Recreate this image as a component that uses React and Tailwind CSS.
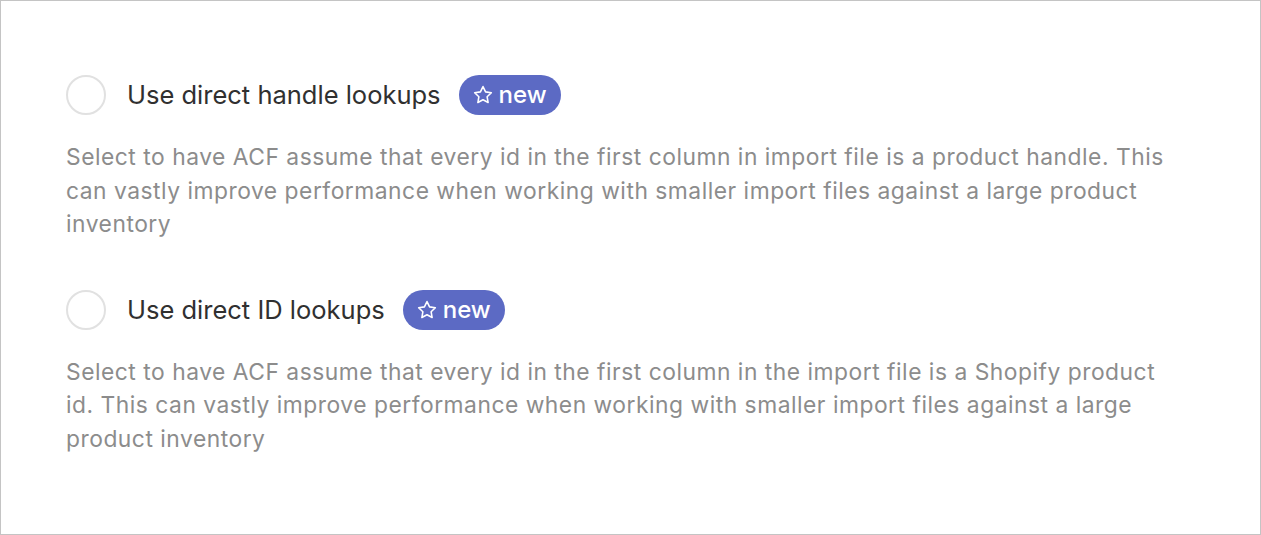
const Star = () => (
  <svg width="22" height="22" viewBox="0 0 24 24" fill="none" stroke="currentColor" strokeWidth="1.7" strokeLinejoin="round">
    <path d="M12 2.8l2.8 5.8 6.3.9-4.6 4.4 1.1 6.3L12 17.2l-5.6 3 1.1-6.3-4.6-4.4 6.3-.9z" />
  </svg>
);

const Option = ({ title, desc }) => (
  <div>
    <div className="flex items-center h-10">
      <div className="w-[40px] h-[40px] rounded-full border-2 border-[#e1e1e1] bg-white shrink-0" />
      <span className="ml-[21px] text-[25.5px] text-[#303030] leading-none">{title}</span>
      <span className="ml-[18px] h-10 pl-[13px] pr-[14px] rounded-full bg-[#5c6ac4] text-white flex items-center gap-[5px] text-[24px] font-medium leading-none">
        <Star />
        new
      </span>
    </div>
    <p className="mt-[25px] text-[22.8px] tracking-[0.52px] leading-[33.5px] text-[#8c8c8c]">{desc}</p>
  </div>
);

export default function App() {
  return (
    <div className="w-[1261px] h-[535px] border border-[#c4c4c4] bg-white" style={{ fontFamily: 'Inter, "Noto Sans", sans-serif' }}>
      <div className="pl-[65px] pr-[80px] pt-[74px] flex flex-col gap-[49px]">
        <Option
          title="Use direct handle lookups"
          desc="Select to have ACF assume that every id in the first column in import file is a product handle. This can vastly improve performance when working with smaller import files against a large product inventory"
        />
        <Option
          title="Use direct ID lookups"
          desc="Select to have ACF assume that every id in the first column in the import file is a Shopify product id. This can vastly improve performance when working with smaller import files against a large product inventory"
        />
      </div>
    </div>
  );
}
